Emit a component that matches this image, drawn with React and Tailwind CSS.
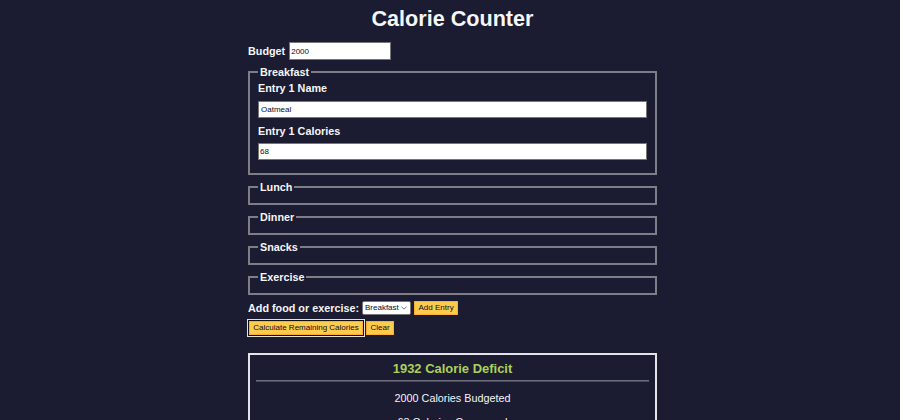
import { useState } from "react";

const sans = { fontFamily: '"Liberation Sans", Arial, Helvetica, sans-serif' };

function Meal({ name, children }) {
  return (
    <fieldset className="min-w-0 border-2 border-[#7e7e86] px-[8px] pt-[4px] pb-[6px] mb-[6px]">
      <legend className="px-[2px] leading-[12px] font-bold text-[10.8px]">{name}</legend>
      {children}
    </fieldset>
  );
}

export default function App() {
  const [budget, setBudget] = useState("2000");
  const [entryName, setEntryName] = useState("Oatmeal");
  const [entryCal, setEntryCal] = useState("68");
  const [meal, setMeal] = useState("breakfast");

  return (
    <div className="min-h-screen bg-[#1b1b32] text-[#f5f6f7]" style={sans}>
      <div className="flex justify-center pl-[5px]">
        <div className="w-[409px] text-[10.8px]">
          <h1 className="mt-[6px] mb-[11px] text-center text-[21.6px] leading-[25px] font-bold">
            Calorie Counter
          </h1>

          <form onSubmit={(e) => e.preventDefault()}>
            <div className="flex items-center gap-[4px] h-[18px] mb-[6px]">
              <label htmlFor="budget" className="font-bold">
                Budget
              </label>
              <input
                id="budget"
                type="number"
                value={budget}
                onChange={(e) => setBudget(e.target.value)}
                className="w-[102px] h-[18px] bg-white border border-[#767676] px-[1px] text-[8px] text-[#0a0a23] [appearance:textfield]"
              />
            </div>

            <Meal name="Breakfast">
              <div className="flex flex-col">
                <label htmlFor="e1-name" className="font-bold leading-[13px] mb-[6px]">
                  Entry 1 Name
                </label>
                <input
                  id="e1-name"
                  type="text"
                  value={entryName}
                  onChange={(e) => setEntryName(e.target.value)}
                  className="h-[17px] mb-[7px] bg-white border border-[#767676] px-[2px] text-[8px] text-[#0a0a23]"
                />
                <label htmlFor="e1-cal" className="font-bold leading-[13px] mb-[5px]">
                  Entry 1 Calories
                </label>
                <input
                  id="e1-cal"
                  type="number"
                  value={entryCal}
                  onChange={(e) => setEntryCal(e.target.value)}
                  className="h-[17px] mb-[7px] bg-white border border-[#767676] px-[1px] text-[8px] text-[#0a0a23] [appearance:textfield]"
                />
              </div>
            </Meal>
            <Meal name="Lunch" />
            <Meal name="Dinner" />
            <Meal name="Snacks" />
            <Meal name="Exercise" />

            <div className="flex items-center gap-[3px] h-[14px] mb-[6px]">
              <label htmlFor="entry-dropdown" className="font-bold">
                Add food or exercise:
              </label>
              <span className="relative flex">
                <select
                  id="entry-dropdown"
                  value={meal}
                  onChange={(e) => setMeal(e.target.value)}
                  className="appearance-none w-[49px] h-[14px] bg-white border border-[#767676] rounded-[2px] pl-[2px] pr-[9px] py-0 text-[8px] leading-[12px] text-[#0a0a23]"
                >
                  <option value="breakfast">Breakfast</option>
                  <option value="lunch">Lunch</option>
                  <option value="dinner">Dinner</option>
                  <option value="snacks">Snacks</option>
                  <option value="exercise">Exercise</option>
                </select>
                <svg
                  className="absolute right-[4px] top-[5px] pointer-events-none"
                  width="6"
                  height="4"
                  viewBox="0 0 6 4"
                  fill="none"
                  stroke="#3a3a4a"
                  strokeWidth="0.7"
                >
                  <path d="M0.5 0.6 L3 3.2 L5.5 0.6" />
                </svg>
              </span>
              <button
                type="button"
                className="h-[14px] px-[3.5px] bg-[#fecc4c] border-[1.2px] border-[#feac32] text-[8px] text-[#0a0a23]"
              >
                Add Entry
              </button>
            </div>

            <div className="flex items-center gap-[3px] h-[14px] pl-[1px]">
              <button
                type="submit"
                className="h-[14px] w-[114px] bg-[#fecc4c] border-[1.2px] border-[#feac32] text-[8px] text-[#0a0a23] shadow-[0_0_0_1px_#101010,0_0_0_2px_#e2e2e2]"
              >
                Calculate Remaining Calories
              </button>
              <button
                type="button"
                className="h-[14px] w-[28px] bg-[#fecc4c] border-[1.2px] border-[#feac32] text-[8px] text-[#0a0a23]"
              >
                Clear
              </button>
            </div>
          </form>

          <div className="mt-[18px] mb-[12px] border-2 border-[#e4e4e8] p-[6px] text-center">
            <div className="text-[12.96px] leading-[15px] font-bold text-[#acd157]">
              1932 Calorie Deficit
            </div>
            <hr className="mt-[4px] border-t border-t-[#6c6c7c] border-b border-b-[#4a4a5c]" />
            <p className="mt-[8px]">2000 Calories Budgeted</p>
            <p className="mt-[8px]">68 Calories Consumed</p>
            <p className="mt-[8px]">0 Calories Burned</p>
          </div>
        </div>
      </div>
    </div>
  );
}
